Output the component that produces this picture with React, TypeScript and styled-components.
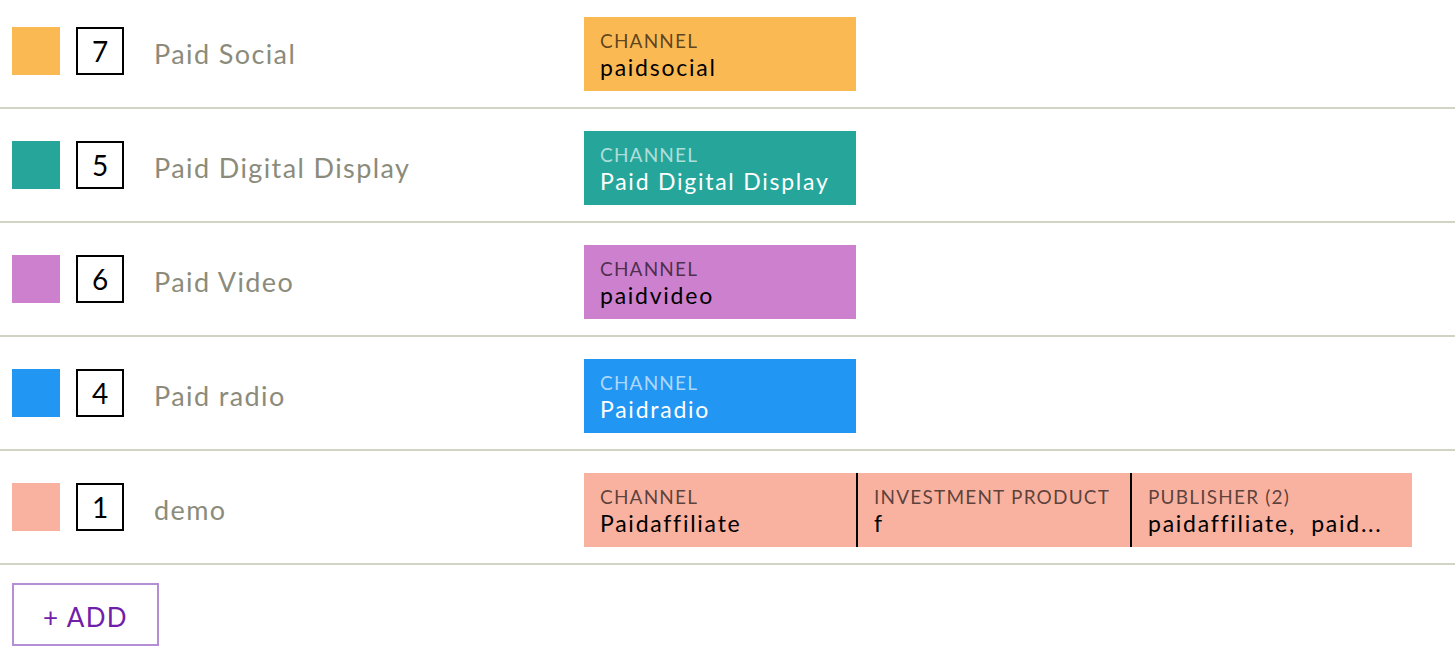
import React from "react";
import styled, { createGlobalStyle } from "styled-components";

const Global = createGlobalStyle`
  html, body { margin: 0; padding: 0; background: #fff; }
  body { font-family: Lato, "Noto Sans", sans-serif; overflow: hidden; }
`;

type TagData = { label: string; value: string; wide?: boolean };
type RowData = { color: string; light: boolean; count: number; name: string; tags: TagData[] };

const rows: RowData[] = [
  { color: "#fbb954", light: false, count: 7, name: "Paid Social", tags: [{ label: "CHANNEL", value: "paidsocial" }] },
  { color: "#26a69a", light: true, count: 5, name: "Paid Digital Display", tags: [{ label: "CHANNEL", value: "Paid Digital Display" }] },
  { color: "#cc80ce", light: false, count: 6, name: "Paid Video", tags: [{ label: "CHANNEL", value: "paidvideo" }] },
  { color: "#2196f3", light: true, count: 4, name: "Paid radio", tags: [{ label: "CHANNEL", value: "Paidradio" }] },
  {
    color: "#f9b1a0",
    light: false,
    count: 1,
    name: "demo",
    tags: [
      { label: "CHANNEL", value: "Paidaffiliate" },
      { label: "INVESTMENT PRODUCT", value: "f" },
      { label: "PUBLISHER (2)", value: "paidaffiliate,\u00a0 paid...", wide: true },
    ],
  },
];

const Page = styled.div`
  margin-top: -5px;
`;

const List = styled.div`
  display: flex;
  flex-direction: column;
`;

const Row = styled.div`
  display: flex;
  align-items: flex-start;
  padding: 22px 0 0 12px;
  box-sizing: border-box;
  height: 114px;
  border-bottom: 2px solid #d3d3c5;
`;

const Swatch = styled.div<{ $color: string }>`
  flex: 0 0 48px;
  height: 48px;
  margin-top: 10px;
  background: ${(p) => p.$color};
`;

const Count = styled.div`
  flex: 0 0 48px;
  height: 48px;
  margin: 10px 0 0 16px;
  box-sizing: border-box;
  border: 2px solid #000;
  display: flex;
  align-items: center;
  justify-content: center;
  font-size: 28px;
  color: #000;
`;

const Name = styled.div`
  flex: 0 0 430px;
  margin: 10px 0 0 30px;
  height: 48px;
  display: flex;
  align-items: center;
  padding-top: 4px;
  box-sizing: border-box;
  font-size: 27px;
  letter-spacing: 1.4px;
  color: #8b8b7b;
`;

const Tags = styled.div<{ $color: string; $light: boolean }>`
  display: flex;
  background: ${(p) => p.$color};
  color: ${(p) => (p.$light ? "#fff" : "#000")};
`;

const Tag = styled.div<{ $wide?: boolean }>`
  box-sizing: content-box;
  min-width: ${(p) => (p.$wide ? 248 : 240)}px;
  max-width: 248px;
  height: 61px;
  padding: 13px 16px 0 16px;
  & + & {
    border-left: 2px solid #000;
  }
`;

const TagLabel = styled.div<{ $light: boolean }>`
  font-size: 19px;
  line-height: 22px;
  letter-spacing: 1.2px;
  color: ${(p) => (p.$light ? "rgba(255,255,255,0.65)" : "rgba(0,0,0,0.65)")};
  white-space: nowrap;
`;

const TagValue = styled.div`
  font-size: 23px;
  line-height: 31px;
  letter-spacing: 1.75px;
  white-space: nowrap;
  overflow: hidden;
  text-overflow: ellipsis;
`;

const AddButton = styled.button`
  margin: 18px 0 0 12px;
  width: 147px;
  height: 63px;
  padding: 4px 0 0;
  background: #fff;
  border: 2px solid #b48fd6;
  color: #7020a8;
  font-family: Lato, "Noto Sans", sans-serif;
  font-size: 26px;
  letter-spacing: 1.4px;
  cursor: pointer;
`;

export default function App() {
  return (
    <Page>
      <Global />
      <List>
        {rows.map((r) => (
          <Row key={r.name}>
            <Swatch $color={r.color} />
            <Count>{r.count}</Count>
            <Name>{r.name}</Name>
            <Tags $color={r.color} $light={r.light}>
              {r.tags.map((t) => (
                <Tag key={t.label} $wide={t.wide}>
                  <TagLabel $light={r.light}>{t.label}</TagLabel>
                  <TagValue>{t.value}</TagValue>
                </Tag>
              ))}
            </Tags>
          </Row>
        ))}
      </List>
      <AddButton>+ ADD</AddButton>
    </Page>
  );
}
